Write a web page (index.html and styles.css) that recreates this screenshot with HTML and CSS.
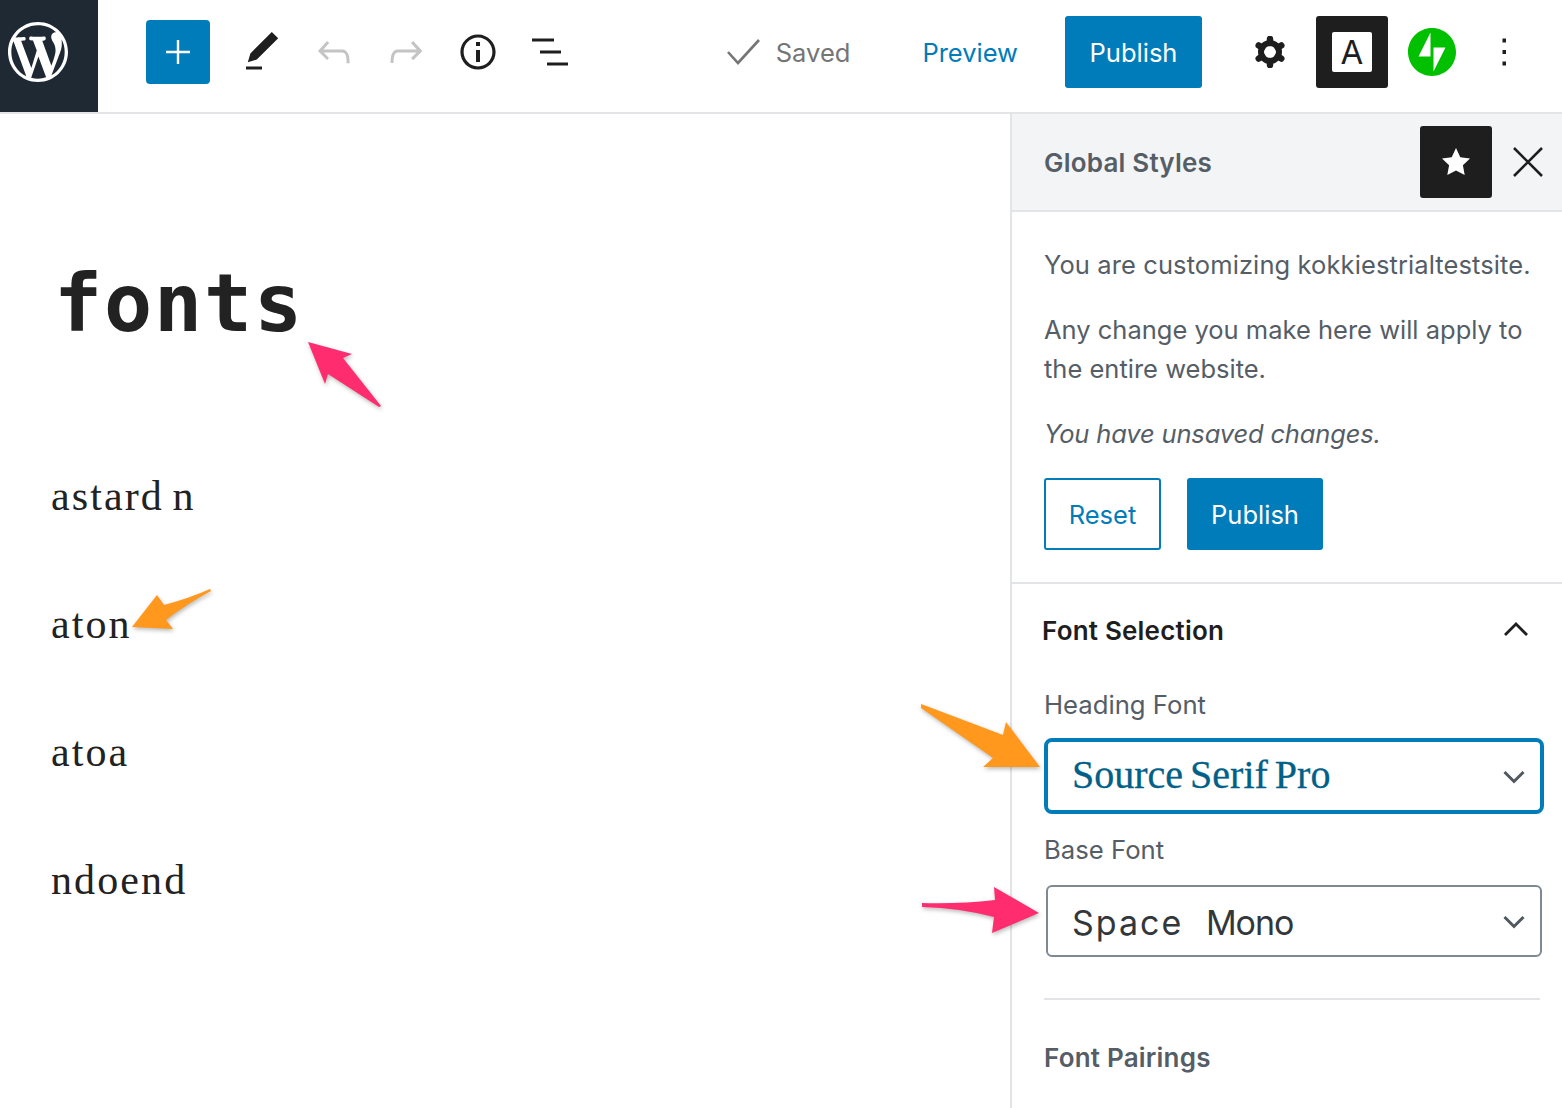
FILE: index.html
```html
<!DOCTYPE html>
<html lang="en">
<head>
<meta charset="utf-8">
<title>Global Styles</title>
<link rel="stylesheet" href="styles.css">
</head>
<body>
<div class="app">
  <header class="topbar">
    <div class="tools">
      <div class="logo">
        <svg class="logo-icon" viewBox="0 0 20 20"><path fill="#fff" fill-rule="evenodd" d="M20 10c0-5.51-4.49-10-10-10C4.48 0 0 4.49 0 10c0 5.52 4.48 10 10 10 5.51 0 10-4.48 10-10zM7.78 15.37L4.37 6.22c.55-.02 1.17-.08 1.17-.08.5-.06.44-1.13-.06-1.11 0 0-1.45.11-2.37.11-.18 0-.37 0-.58-.01C4.12 2.69 6.87 1.11 10 1.11c2.33 0 4.45.87 6.05 2.34-.68-.11-1.65.39-1.65 1.58 0 .74.45 1.36.9 2.1.35.61.55 1.36.55 2.46 0 1.49-1.4 5-1.4 5l-3.03-8.37c.54-.02.82-.17.82-.17.5-.05.44-1.25-.06-1.22 0 0-1.44.12-2.38.12-.87 0-2.33-.12-2.33-.12-.5-.03-.56 1.2-.06 1.22l.92.08 1.26 3.41zM17.41 10c.24-.64.74-1.87.43-4.25.7 1.29 1.05 2.71 1.05 4.25 0 3.29-1.73 6.24-4.4 7.78.97-2.59 1.94-5.2 2.92-7.78zM6.1 18.09C3.12 16.65 1.11 13.53 1.11 10c0-1.3.23-2.48.72-3.59C3.25 10.3 4.67 14.2 6.1 18.09zm4.03-6.63l2.58 6.98c-.86.29-1.76.45-2.71.45-.79 0-1.57-.11-2.29-.33.81-2.38 1.62-4.74 2.42-7.1z"/></svg>
      </div>
      <div class="add-btn">
        <svg class="icon" viewBox="0 0 48 48"><path fill="#fff" d="M22.8 12h2.4v10.8H36v2.4H25.2V36h-2.4V25.2H12v-2.4h10.8z"/></svg>
      </div>
      <div class="tool">
        <svg class="icon" viewBox="0 0 24 24"><path fill="#1e1e1e" d="M20.1 5.1L16.9 2 6.2 12.7l-1.3 4.4 4.5-1.3L20.1 5.1zM4 20.8h8v-1.5H4v1.5z"/></svg>
      </div>
      <div class="tool">
        <svg class="icon" viewBox="0 0 24 24"><path fill="#c4c4c4" d="M18.3 11.7c-.6-.6-1.4-.9-2.3-.9H6.7l2.9-3.3-1.1-1-4.5 5L8.5 16l1-1-2.7-2.7H16c.5 0 .9.2 1.3.5 1 1 1 3.4 1 4.5v.3h1.5v-.2c0-1.5 0-4.3-1.5-5.7z"/></svg>
      </div>
      <div class="tool">
        <svg class="icon" viewBox="0 0 24 24"><path fill="#c4c4c4" d="M15.6 6.5l-1.1 1 2.9 3.3H8c-.9 0-1.7.3-2.3.9-1.4 1.5-1.4 4.2-1.4 5.6v.2h1.5v-.3c0-1.1 0-3.5 1-4.5.3-.3.7-.5 1.3-.5h9.2L14.5 15l1.1 1.1 4.6-4.6-4.6-5z"/></svg>
      </div>
      <div class="tool">
        <svg class="icon" viewBox="0 0 24 24"><path fill="#1e1e1e" d="M12 3.2c-4.8 0-8.8 3.9-8.8 8.8 0 4.8 3.9 8.8 8.8 8.8 4.8 0 8.8-3.9 8.8-8.8 0-4.8-4-8.8-8.8-8.8zm0 16c-4 0-7.2-3.3-7.2-7.2C4.8 8 8 4.8 12 4.8s7.2 3.3 7.2 7.2c0 4-3.2 7.2-7.2 7.2zM11 17h2v-6h-2v6zm0-8h2V7h-2v2z"/></svg>
      </div>
      <div class="tool">
        <svg class="icon" viewBox="0 0 48 48"><path fill="#1e1e1e" d="M6 10.500h22v3H6zM14 22.500h21v3H14zM21 34.500h21v3H21z"/></svg>
      </div>
    </div>
    <div class="actions">
      <div class="saved">
        <svg class="saved-check" viewBox="0 0 34 26"><path fill="none" stroke="#757575" stroke-width="2.600" d="M1 13l10 11L32 1"/></svg>
        <span>Saved</span>
      </div>
      <span class="preview">Preview</span>
      <div class="btn-primary top-publish">Publish</div>
      <div class="tool">
        <svg class="gear" viewBox="0 0 32 32">
          <circle cx="16" cy="16" r="9" fill="none" stroke="#1e1e1e" stroke-width="6"/>
          <path fill="none" stroke="#1e1e1e" stroke-width="6.500" stroke-linecap="round" d="M16 7V3M16 25v4M23.800 11.500l3.460-2M8.200 11.500L4.740 9.500M23.800 20.500l3.460 2M8.200 20.500l-3.460 2"/>
        </svg>
      </div>
      <div class="style-btn"><span class="style-a">A</span></div>
      <div class="jetpack">
        <svg class="jetpack-icon" viewBox="0 0 32 32"><path fill="#00c000" fill-rule="evenodd" d="M16 0C7.200 0 0 7.200 0 16s7.200 16 16 16 16-7.200 16-16S24.800 0 16 0zM15 19H7l8-16v16zM17 29V13h8l-8 16z"/></svg>
      </div>
      <div class="tool more">
        <svg class="icon" viewBox="0 0 48 48"><path fill="#1e1e1e" d="M22.500 10.500h3.500v4h-3.500zM22.500 22h3.500v4h-3.500zM22.500 33.500h3.500v4h-3.500z"/></svg>
      </div>
    </div>
  </header>

  <div class="workspace">
    <main class="canvas">
      <h1 class="post-title"><span class="cell">f</span><span class="cell">o</span><span class="cell">n</span><span class="cell">t</span><span class="cell">s</span></h1>
      <p class="post-line">astard n</p>
      <p class="post-line">aton</p>
      <p class="post-line">atoa</p>
      <p class="post-line">ndoend</p>
    </main>

    <aside class="sidebar">
      <div class="side-head">
        <span class="side-title">Global Styles</span>
        <div class="side-head-tools">
          <div class="star-btn">
            <svg class="star" viewBox="0 0 28 28"><path fill="#fff" d="M14 0l4.300 9.200 9.700 1.200-7.100 6.800 1.800 9.800L14 22.400 5.300 27l1.800-9.800L0 10.400l9.700-1.200z"/></svg>
          </div>
          <svg class="close" viewBox="0 0 30 30"><path fill="none" stroke="#1e1e1e" stroke-width="2.600" d="M1 1l28 28M29 1L1 29"/></svg>
        </div>
      </div>

      <section class="intro">
        <p class="intro-text intro-wide">You are customizing kokkiestrialtestsite.</p>
        <p class="intro-text">Any change you make here will apply to the entire website.</p>
        <p class="intro-text intro-em">You have unsaved changes.</p>
        <div class="intro-actions">
          <div class="btn-outline">Reset</div>
          <div class="btn-primary side-publish">Publish</div>
        </div>
      </section>

      <section class="fonts-panel">
        <div class="panel-head">
          <h2 class="panel-title">Font Selection</h2>
          <svg class="panel-chevron" viewBox="0 0 26 16"><path fill="none" stroke="#1e1e1e" stroke-width="2.800" d="M2 14L13 3l11 11"/></svg>
        </div>
        <div class="field-label">Heading Font</div>
        <div class="select select-focus">
          <span class="select-serif">Source Serif Pro</span>
          <svg class="select-chevron" viewBox="0 0 22 14"><path fill="none" stroke="#50575e" stroke-width="3" d="M1.500 2L11 11.500 20.500 2"/></svg>
        </div>
        <div class="field-label field-label-second">Base Font</div>
        <div class="select select-plain">
          <span class="select-mono"><span class="mono-first">Space</span> <span class="mono-second">Mono</span></span>
          <svg class="select-chevron" viewBox="0 0 22 14"><path fill="none" stroke="#50575e" stroke-width="3" d="M1.500 2L11 11.500 20.500 2"/></svg>
        </div>
        <div class="divider"></div>
        <h2 class="pairings">Font Pairings</h2>
      </section>
    </aside>
  </div>

  <svg class="arrows" viewBox="0 0 1562 1108">
    <path class="arrow-pink" d="M308 342L352 354L343 358L381 406L379 407L328 374L325 384Z"/>
    <path class="arrow-orange" d="M132 627L157 595L164 605Q190 598 210 589L211 591Q185 605 166 620L173 629Z"/>
    <path class="arrow-orange" d="M921 704L1003 735L1006 722L1040 767L983 767L993 758L921 708Z"/>
    <path class="arrow-pink" d="M922 903Q960 904 995 900L994 887L1039 913L992 933L994 917Q960 908 922 907Z"/>
  </svg>
</div>
</body>
</html>
```
FILE: styles.css
```css
* { box-sizing: border-box; }

html, body {
  margin: 0;
  height: 100%;
  background: #fff;
}

body {
  font-family: Inter, "Liberation Sans", sans-serif;
  color: #1e1e1e;
  overflow: hidden;
}

.app {
  position: relative;
  width: 1562px;
  height: 1108px;
  overflow: hidden;
  display: flex;
  flex-direction: column;
}

/* Top bar */
.topbar {
  flex: none;
  height: 114px;
  display: flex;
  justify-content: space-between;
  border-bottom: 2px solid #e2e4e7;
}

.tools, .actions {
  display: flex;
  align-items: center;
}

.logo {
  width: 98px;
  height: 112px;
  background: #1f2933;
  display: flex;
  align-items: center;
  padding: 0 0 8px 8px;
}

.logo-icon { width: 60px; height: 60px; }

.add-btn {
  width: 64px;
  height: 64px;
  margin: -8px 16px 0 48px;
  background: #007cba;
  border-radius: 4px;
  display: flex;
  align-items: center;
  justify-content: center;
}

.tool {
  width: 72px;
  height: 72px;
  margin-top: -8px;
  display: flex;
  align-items: center;
  justify-content: center;
}

.icon { width: 48px; height: 48px; display: block; }

.saved {
  display: flex;
  align-items: center;
  gap: 15px;
  margin-top: -8px;
  font-size: 25.500px;
  color: #757575;
}

.saved-check { width: 34px; height: 26px; }

.preview {
  margin: -8px 47px 0 72px;
  font-size: 25.500px;
  color: #007cba;
}

.btn-primary {
  display: flex;
  align-items: center;
  justify-content: center;
  height: 72px;
  background: #007cba;
  color: #fff;
  border-radius: 3px;
  font-size: 25.500px;
}

.top-publish {
  width: 137px;
  margin: -8px 32px 0 0;
}

.gear { width: 32px; height: 32px; }

.style-btn {
  width: 72px;
  height: 72px;
  margin: -8px 20px 0 10px;
  background: #1e1e1e;
  border-radius: 3px;
  display: flex;
  align-items: center;
  justify-content: center;
}

.style-a {
  width: 40px;
  height: 40px;
  background: #fff;
  border-radius: 2px;
  color: #1e1e1e;
  font-size: 33px;
  line-height: 40px;
  text-align: center;
}

.jetpack {
  width: 48px;
  height: 48px;
  margin-top: -8px;
}

.jetpack-icon { width: 48px; height: 48px; display: block; }

.more { margin-left: 12px; margin-right: 22px; }

/* Work area */
.workspace {
  flex: 1;
  min-height: 0;
  display: grid;
  grid-template-columns: 1010px 552px;
}

.canvas { padding: 145px 0 0 51px; }

.post-title {
  margin: 0 0 115px 2px;
  display: flex;
  font-family: "DejaVu Sans Mono", monospace;
  font-weight: 700;
  font-size: 80px;
  line-height: 90px;
  color: #222;
}

.cell {
  width: 50px;
  text-align: center;
}

.post-line {
  margin: 0 0 64px;
  font-family: "Liberation Serif", serif;
  font-size: 42px;
  line-height: 64px;
  letter-spacing: 2.100px;
  word-spacing: -4px;
  color: #222;
}

/* Sidebar */
.sidebar {
  border-left: 2px solid #e2e4e7;
  min-height: 0;
  overflow: hidden;
}

.side-head {
  height: 98px;
  padding-left: 32px;
  background: #f3f4f5;
  border-bottom: 2px solid #e2e4e7;
  display: flex;
  align-items: center;
  justify-content: space-between;
}

.side-title {
  font-size: 26px;
  letter-spacing: .2px;
  font-weight: 600;
  color: #555d66;
}

.side-head-tools {
  display: flex;
  align-items: center;
  gap: 21px;
  padding-right: 19px;
}

.star-btn {
  width: 72px;
  height: 72px;
  background: #1e1e1e;
  border-radius: 3px;
  display: flex;
  align-items: center;
  justify-content: center;
}

.star { width: 28px; height: 28px; }
.close { width: 30px; height: 30px; }

.intro {
  padding: 33px 22px 32px 32px;
  border-bottom: 2px solid #e2e4e7;
}

.intro-text {
  margin: 0 0 26px;
  font-size: 25.500px;
  line-height: 39px;
  color: #555d66;
}

.intro-wide { letter-spacing: .1px; }

.intro-em {
  font-style: italic;
  margin-bottom: 25px;
  letter-spacing: -.16px;
}

.intro-actions {
  display: flex;
  gap: 26px;
}

.btn-outline {
  width: 117px;
  height: 72px;
  display: flex;
  align-items: center;
  justify-content: center;
  border: 2px solid #007cba;
  border-radius: 3px;
  color: #007cba;
  font-size: 25.500px;
}

.side-publish { width: 136px; }

.fonts-panel { padding: 29px 18px 0 32px; }

.panel-head {
  display: flex;
  align-items: center;
  justify-content: space-between;
  height: 34px;
  margin-left: -2px;
  padding-right: 15px;
}

.panel-title {
  margin: 0;
  font-size: 26px;
  letter-spacing: .2px;
  font-weight: 600;
  color: #1e1e1e;
}

.panel-chevron { width: 26px; height: 16px; margin-top: -2px; }

.field-label {
  margin-top: 41px;
  height: 34px;
  line-height: 34px;
  font-size: 25.700px;
  color: #555d66;
}

.field-label-second { margin-top: 19px; }

.select {
  display: flex;
  align-items: center;
  justify-content: space-between;
  background: #fff;
}

.select-focus {
  height: 76px;
  margin: 16px 0 0 0;
  width: 500px;
  padding: 0 15px 0 24px;
  border: 4px solid #007cba;
  border-radius: 8px;
  color: #016087;
}

.select-plain {
  height: 72px;
  margin: 18px 2px 0 2px;
  width: 496px;
  padding: 0 15px 0 24px;
  border: 2px solid #7e8993;
  border-radius: 6px;
  color: #32373c;
}

.select-serif {
  font-family: "Liberation Serif", serif;
  font-size: 40px;
  line-height: 44px;
  word-spacing: -3px;
  margin-top: -3px;
  -webkit-text-stroke: .3px #016087;
}

.select-mono {
  font-family: Inter, sans-serif;
  font-size: 34px;
  word-spacing: 13px;
  margin-top: 2px;
}

.mono-first { letter-spacing: 2px; }
.mono-second { letter-spacing: -1px; }

.select-chevron { width: 22px; height: 14px; flex: none; margin-top: 2px; }

.divider {
  width: 496px;
  height: 2px;
  margin-top: 41px;
  background: #e2e4e7;
}

.pairings {
  margin: 41px 0 0;
  font-size: 26px;
  letter-spacing: .2px;
  line-height: 34px;
  font-weight: 600;
  color: #555d66;
}

/* Annotation arrows laid over the screenshot */
.arrows {
  position: absolute;
  inset: 0;
  width: 1562px;
  height: 1108px;
  pointer-events: none;
  filter: drop-shadow(1px 2px 2px rgba(0, 0, 0, .28));
}

.arrow-pink { fill: #ff2d6f; }
.arrow-orange { fill: #ff981c; }
```
